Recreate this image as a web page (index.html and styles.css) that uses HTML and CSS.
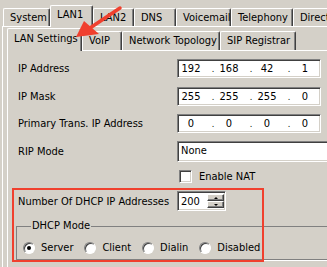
FILE: index.html
```html
<!DOCTYPE html>
<html lang="en">
<head>
    <meta charset="UTF-8">
    <title>LAN Settings</title>
    <link rel="stylesheet" href="styles.css">
</head>
<body>
    <div class="window">
        <!-- Top level tabs -->
        <div class="tabbar">
            <div class="tab w-system">System</div>
            <div class="tab tab-active w-lan1">LAN1</div>
            <div class="tab w-lan2">LAN2</div>
            <div class="tab w-dns">DNS</div>
            <div class="tab w-voicemail">Voicemail</div>
            <div class="tab w-telephony">Telephony</div>
            <div class="tab w-direct">Direct</div>
        </div>

        <div class="panel">
            <!-- Second level tabs -->
            <div class="tabbar subtabbar">
                <div class="tab tab-active w-lanset">LAN Settings</div>
                <div class="tab w-voip">VoIP</div>
                <div class="tab w-topo">Network Topology</div>
                <div class="tab w-sip">SIP Registrar</div>
            </div>

            <div class="subpanel">
                <div class="row row-first">
                    <span class="label">IP Address</span>
                    <div class="field ipfield">
                        <span class="octet">192</span><span class="dot">.</span>
                        <span class="octet">168</span><span class="dot">.</span>
                        <span class="octet">42</span><span class="dot">.</span>
                        <span class="octet">1</span>
                    </div>
                </div>
                <div class="row">
                    <span class="label">IP Mask</span>
                    <div class="field ipfield">
                        <span class="octet">255</span><span class="dot">.</span>
                        <span class="octet">255</span><span class="dot">.</span>
                        <span class="octet">255</span><span class="dot">.</span>
                        <span class="octet">0</span>
                    </div>
                </div>
                <div class="row">
                    <span class="label">Primary Trans. IP Address</span>
                    <div class="field ipfield">
                        <span class="octet">0</span><span class="dot">.</span>
                        <span class="octet">0</span><span class="dot">.</span>
                        <span class="octet">0</span><span class="dot">.</span>
                        <span class="octet">0</span>
                    </div>
                </div>
                <div class="row row-combo">
                    <span class="label">RIP Mode</span>
                    <div class="field combo">None</div>
                </div>
                <div class="row row-check">
                    <span class="label"></span>
                    <span class="checkbox"></span>
                    <span class="check-text">Enable NAT</span>
                </div>
                <div class="row row-spin">
                    <span class="label">Number Of DHCP IP Addresses</span>
                    <div class="field spin">
                        <span class="spin-val">200</span>
                        <div class="spin-btns">
                            <span class="spin-btn"><span class="tri-up"></span></span>
                            <span class="spin-btn"><span class="tri-down"></span></span>
                        </div>
                    </div>
                </div>

                <fieldset class="group">
                    <legend>DHCP Mode</legend>
                    <div class="radios">
                        <span class="radio radio-on"></span><span class="radio-text">Server</span>
                        <span class="radio"></span><span class="radio-text">Client</span>
                        <span class="radio"></span><span class="radio-text">Dialin</span>
                        <span class="radio"></span><span class="radio-text">Disabled</span>
                    </div>
                </fieldset>
            </div>
        </div>

        <!-- annotation overlay -->
        <div class="mark"></div>
        <svg class="arrow" width="327" height="267" viewBox="0 0 327 267">
            <line x1="120" y1="8" x2="90" y2="28" stroke="#f0402e" stroke-width="3.5" stroke-linecap="round"/>
            <polygon points="76,37 84,21 99,34" fill="#f0402e"/>
        </svg>
    </div>
</body>
</html>
```

FILE: styles.css
```css
body {
    margin: 0;
    background-color: #d4d0c8; /* classic dialog grey */
    font-family: "DejaVu Sans Condensed", "DejaVu Sans", sans-serif;
    font-size: 11px;
    color: #000;
}

.window {
    position: relative;
    width: 327px;
    height: 267px;
    overflow: hidden;
}

/* tabs */
.tabbar {
    display: flex;
    align-items: flex-end;
    height: 26px;
    padding-left: 3px;
    white-space: nowrap;
}

.tab {
    box-sizing: border-box;
    flex: none;
    height: 18px;
    padding: 1px 0 0 6px;
    line-height: 16px;
    border-top: 1px solid #fff;
    border-left: 1px solid #fff;
    border-right: 1px solid #404040;
    border-radius: 2px 2px 0 0;
    box-shadow: inset -1px 0 #808080;
    overflow: hidden;
}

.tab-active {
    position: relative;
    z-index: 1;
    height: 22px;
    margin-bottom: -1px;
    padding-top: 1px;
    background-color: #d4d0c8;
}

.w-system { width: 47px; }
.w-lan1 { width: 43px; }
.w-lan2 { width: 41px; }
.w-dns { width: 42px; }
.w-voicemail { width: 55px; }
.w-telephony { width: 62px; }
.w-direct { width: 60px; }

.panel {
    margin-left: 2px;
    border-top: 1px solid #fff;
    border-left: 1px solid #fff;
    padding-left: 4px;
    height: 300px;
}

.subtabbar {
    height: 23px;
    padding-left: 0;
}

.subtabbar .tab {
    height: 19px;
    padding-top: 1px;
}

.subtabbar .tab-active {
    height: 23px;
    padding-top: 2px;
}

.w-lanset { width: 75px; }
.w-voip { width: 40px; }
.w-topo { width: 98px; }
.w-sip { width: 76px; }

.subpanel {
    border-top: 1px solid #fff;
    border-left: 1px solid #fff;
    padding: 8px 0 0 10px;
    height: 300px;
}

/* form rows */
.row {
    display: flex;
    align-items: center;
    height: 19px;
    margin-top: 8px;
}

.row-first { margin-top: 0; }
.row + .row { margin-top: 9px; }
.row + .row + .row { margin-top: 8px; }

.label {
    flex: none;
    width: 159px;
}

.field {
    box-sizing: border-box;
    flex: none;
    height: 19px;
    background-color: #fff;
    border: 1px solid;
    border-color: #808080 #fff #fff #808080;
    box-shadow: inset 1px 1px #404040, inset -1px -1px #d4d0c8;
}

.ipfield {
    display: flex;
    align-items: center;
    width: 144px;
    padding-left: 1px;
}

.octet {
    width: 24px;
    text-align: center;
}

.dot {
    width: 14px;
    padding-left: 6px;
    box-sizing: border-box;
    text-align: center;
    font-size: 9px;
}

.row-combo {
    height: 21px;
}

.combo {
    width: 170px;
    height: 21px;
    line-height: 17px;
    padding-left: 3px;
}

.row-check {
    height: 13px;
}

.row.row-check { margin-top: 8px; }

.checkbox {
    box-sizing: border-box;
    width: 13px;
    height: 13px;
    margin-left: 2px;
    background-color: #fff;
    border: 1px solid;
    border-color: #808080 #fff #fff #808080;
    box-shadow: inset 1px 1px #404040, inset -1px -1px #d4d0c8;
}

.check-text {
    margin-left: 7px;
}

.row-spin {
    height: 20px;
}

.row.row-spin { margin-top: 10px; }

.spin {
    display: flex;
    width: 49px;
    height: 20px;
    padding: 2px 1px 2px 2px;
}

.spin-val {
    flex: 1;
    line-height: 16px;
    padding-left: 1px;
}

.spin-btns {
    display: flex;
    flex-direction: column;
    width: 17px;
}

.spin-btn {
    box-sizing: border-box;
    display: flex;
    align-items: center;
    justify-content: center;
    height: 8px;
    background-color: #d4d0c8;
    border: 1px solid;
    border-color: #fff #404040 #404040 #fff;
    box-shadow: inset -1px -1px #808080;
}

.tri-up,
.tri-down {
    width: 0;
    height: 0;
    border-left: 2px solid transparent;
    border-right: 2px solid transparent;
}

.tri-up { border-bottom: 2px solid #000; }
.tri-down { border-top: 2px solid #000; }

/* DHCP mode group */
.group {
    margin: 8px 0 0 -2px;
    padding: 8px 0 5px 6px;
    width: 340px;
    border: 1px solid #808080;
    box-shadow: 1px 1px #fff;
}

.group legend {
    margin-left: 8px;
    padding: 0 1px;
    line-height: 14px;
}

.radios {
    display: flex;
    align-items: center;
    height: 13px;
}

.radio {
    box-sizing: border-box;
    position: relative;
    width: 12px;
    height: 12px;
    border-radius: 50%;
    background-color: #fff;
    border: 1px solid;
    border-color: #808080 #fff #fff #808080;
    box-shadow: inset 1px 1px #404040;
}

.radio-on::after {
    content: "";
    position: absolute;
    left: 3px;
    top: 3px;
    width: 4px;
    height: 4px;
    border-radius: 50%;
    background-color: #000;
}

.radio-text {
    margin: 0 11px 0 6px;
}

/* red annotation */
.mark {
    position: absolute;
    left: 12px;
    top: 188px;
    width: 252px;
    height: 74px;
    box-sizing: border-box;
    border: 2px solid #f0402e;
}

.arrow {
    position: absolute;
    left: 0;
    top: 0;
    pointer-events: none;
    z-index: 2;
}
```
